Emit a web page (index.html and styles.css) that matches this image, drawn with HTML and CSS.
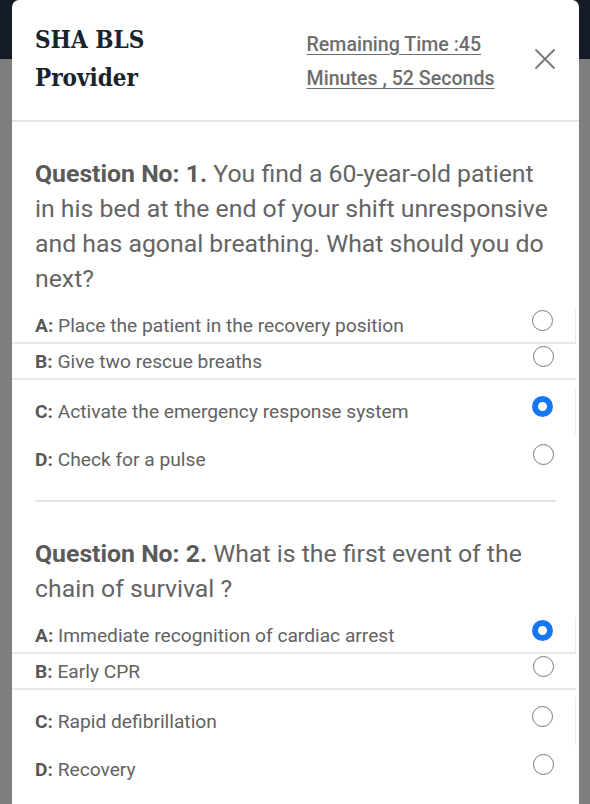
FILE: index.html
```html
<!DOCTYPE html>
<html>
<head>
<meta charset="utf-8">
<link rel="stylesheet" href="styles.css">
</head>
<body>
<div class="backdrop-top"></div>
<div class="modal">
  <div class="modal-header">
    <h1 class="title">SHA BLS<br>Provider</h1>
    <a class="timer">Remaining Time :45 Minutes , 52 Seconds</a>
    <button class="close" aria-label="Close">
      <svg width="22" height="22" viewBox="0 0 22 22"><path d="M1.5 1.5 L20.5 20.5 M20.5 1.5 L1.5 20.5" stroke="#777" stroke-width="1.8" fill="none"/></svg>
    </button>
  </div>
  <div class="modal-body">
    <div class="question">
      <p class="q-text"><b>Question No: 1.</b> You find a 60-year-old patient in his bed at the end of your shift unresponsive and has agonal breathing. What should you do next?</p>
      <div class="options">
        <label class="opt boxed edge"><span><b>A:</b> Place the patient in the recovery position</span><i class="radio"></i></label>
        <label class="opt boxed"><span><b>B:</b> Give two rescue breaths</span><i class="radio"></i></label>
        <label class="opt tall first-tall edge"><span><b>C:</b> Activate the emergency response system</span><i class="radio checked"></i></label>
        <label class="opt tall"><span><b>D:</b> Check for a pulse</span><i class="radio"></i></label>
      </div>
    </div>
    <hr class="sep">
    <div class="question">
      <p class="q-text"><b>Question No: 2.</b> What is the first event of the chain of survival ?</p>
      <div class="options">
        <label class="opt boxed edge"><span><b>A:</b> Immediate recognition of cardiac arrest</span><i class="radio checked"></i></label>
        <label class="opt boxed"><span><b>B:</b> Early CPR</span><i class="radio"></i></label>
        <label class="opt tall first-tall edge"><span><b>C:</b> Rapid defibrillation</span><i class="radio"></i></label>
        <label class="opt tall"><span><b>D:</b> Recovery</span><i class="radio"></i></label>
      </div>
    </div>
  </div>
</div>
</body>
</html>
```
FILE: styles.css
```css
html, body {
  margin: 0;
  padding: 0;
}
body {
  background: #7e7e7e;
  font-family: Roboto, "Liberation Sans", sans-serif;
  width: 590px;
  height: 804px;
  overflow: hidden;
  position: relative;
}
.backdrop-top {
  position: absolute;
  left: 0;
  top: 0;
  width: 590px;
  height: 59px;
  background: #151b25;
}
.modal {
  position: relative;
  margin-left: 12px;
  width: 567px;
  min-height: 804px;
  background: #fff;
  border-radius: 7px 7px 0 0;
}
.modal-header {
  display: flex;
  align-items: flex-start;
  height: 120px;
  border-bottom: 2px solid #e4e4e4;
  padding: 0 23px;
  box-sizing: content-box;
}
.title {
  margin: 21px 0 0 0;
  font-family: "DejaVu Serif", "Liberation Serif", serif;
  font-stretch: condensed;
  font-weight: bold;
  font-size: 24px;
  line-height: 38px;
  color: #17232d;
  width: 275px;
}
.timer {
  margin-top: 28px;
  width: 196px;
  font-size: 19.6px;
  font-weight: 500;
  line-height: 34px;
  color: #6e6e6e;
  text-decoration: underline;
  text-underline-offset: 3px;
}
.close {
  margin: 48px 0 0 34px;
  padding: 0;
  border: none;
  background: none;
  width: 22px;
  height: 22px;
}
.modal-body {
  padding: 34px 23px 0 23px;
}
.q-text {
  margin: 0;
  font-size: 24.8px;
  line-height: 35px;
  color: #646464;
}
.q-text b {
  color: #5a5a5a;
}
.options {
  margin: 12px -20px 0 -23px;
}
.opt {
  display: flex;
  align-items: center;
  justify-content: space-between;
  padding: 0 22px 0 23px;
  font-size: 19.2px;
  color: #626262;
  box-sizing: border-box;
}
.opt b {
  color: #585858;
}
.boxed {
  height: 36px;
  border-bottom: 2px solid #e8e8e8;
}
.tall {
  height: 48px;
}
.first-tall {
  margin-top: 7px;
}
.edge {
  border-right: 1px solid #ececec;
}
.radio {
  display: block;
  width: 21px;
  height: 21px;
  box-sizing: border-box;
  border: 1.6px solid #7a7a7a;
  border-radius: 50%;
  margin-bottom: 10px;
}
.radio.checked {
  border: 6px solid #1676f0;
}
.sep {
  margin: 17px 0 34px 0;
  border: none;
  border-top: 2px solid #e2e2e2;
}
```
